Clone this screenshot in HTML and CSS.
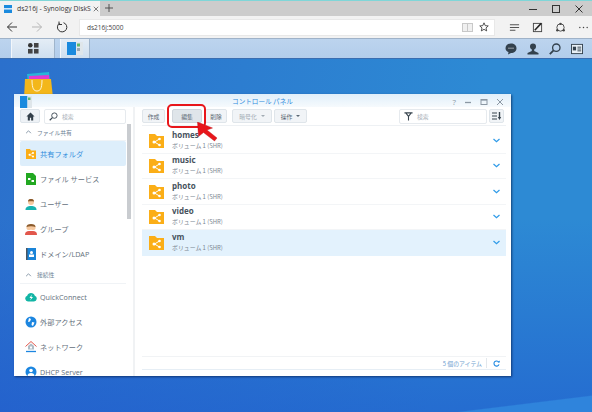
FILE: index.html
```html
<!DOCTYPE html>
<html lang="ja">
  <head>
    <meta charset="UTF-8" />
    <title>ds216j - Synology DiskStation</title>
    <link rel="stylesheet" href="styles.css">
  </head>
  <body>
    <div class="tabbar">
      <div class="tab">
        <svg class="fav" viewBox="0 0 8 8"><rect width="8" height="8" fill="#1a8ade"/><rect y="3" width="8" height="1.6" fill="#cfe6f8"/></svg>
        <span class="tab-title">ds216j - Synology DiskS</span>
        <svg class="tab-x" viewBox="0 0 8 8"><path d="M1 1l6 6M7 1l-6 6" stroke="#555" fill="none"/></svg>
      </div>
      <svg class="tab-new" viewBox="0 0 9 9"><path d="M4.5 0v9M0 4.500h9" stroke="#444" fill="none"/></svg>
      <div class="win-btns">
        <svg viewBox="0 0 10 10"><path d="M1 5.500h8" stroke="#333" fill="none"/></svg>
        <svg viewBox="0 0 10 10"><rect x="1.500" y="1.500" width="7" height="7" stroke="#333" fill="none"/></svg>
        <svg viewBox="0 0 10 10"><path d="M1.500 1.500l7 7M8.500 1.500l-7 7" stroke="#333" fill="none"/></svg>
      </div>
    </div>

    <div class="navbar">
      <div class="nav-btns">
        <svg viewBox="0 0 12 12"><path d="M11 6H1.500M6 1.500L1.500 6 6 10.500" stroke="#333" fill="none"/></svg>
        <svg viewBox="0 0 12 12"><path d="M1 6h9.500M6 1.500L10.500 6 6 10.500" stroke="#b5b5b5" fill="none"/></svg>
        <svg viewBox="0 0 12 12"><path d="M7.500 1.700A4.700 4.700 0 1 1 3.500 2.300" stroke="#333" fill="none"/><path d="M3 .5v3h3" stroke="#333" fill="none"/></svg>
      </div>
      <div class="address">
        <span>ds216j:5000</span>
        <svg class="reading" viewBox="0 0 11 9"><rect x=".5" y=".5" width="10" height="8" fill="#f0f0f0" stroke="#c8c8c8"/><path d="M5.500 0v9" stroke="#c8c8c8"/></svg>
        <svg class="star" viewBox="0 0 12 12"><path d="M6 1l1.500 3.400 3.600.3-2.700 2.400.8 3.600L6 8.800l-3.200 1.900.8-3.600L.9 4.700l3.600-.3z" stroke="#333" fill="none"/></svg>
      </div>
      <div class="nav-tools">
        <svg viewBox="0 0 12 12"><path d="M1 3h10M1 6h10M1 9h6" stroke="#444" fill="none"/></svg>
        <svg viewBox="0 0 12 12"><rect x="1.500" y="1.500" width="9" height="9" fill="none" stroke="#444"/><path d="M3 9l7-7.500" stroke="#222" stroke-width="1.600"/></svg>
        <svg viewBox="0 0 12 12"><circle cx="6" cy="6" r="4" fill="none" stroke="#444"/><circle cx="6" cy="2" r="1.300" fill="#444"/><circle cx="2.500" cy="9" r="1.300" fill="#444"/><circle cx="9.500" cy="9" r="1.300" fill="#444"/></svg>
        <svg viewBox="0 0 12 12"><circle cx="2" cy="6" r=".8" fill="#444"/><circle cx="6" cy="6" r=".8" fill="#444"/><circle cx="10" cy="6" r=".8" fill="#444"/></svg>
      </div>
    </div>

    <div class="taskbar">
      <div class="task-btn main-menu">
        <svg viewBox="0 0 12 12"><rect x="0" y="0" width="5" height="5" rx="2.500" fill="#333"/><rect x="6.500" y="0" width="5" height="5" fill="#444"/><rect x="0" y="6.500" width="5" height="5" fill="#444"/><rect x="6.500" y="6.500" width="5" height="5" fill="#444"/></svg>
      </div>
      <div class="task-btn app-btn">
        <svg viewBox="0 0 16 13"><rect width="9" height="13" fill="#1a8ade"/><rect x="9" width="7" height="13" fill="#dfe6ea"/><rect x="10" y="1.500" width="3" height="3" fill="#5fb86a"/><rect x="10" y="6" width="3" height="3" fill="#9aa7b2"/></svg>
      </div>
      <div class="task-tools">
        <svg viewBox="0 0 12 12"><path d="M6 .5c3.200 0 5.500 2 5.500 4.700S9.200 10 6 10L3 11.500l.5-2.400C1.500 8.300.5 6.900.5 5.200.5 2.500 2.800.5 6 .5z" fill="#33414d"/><path d="M3.500 5.200h1M5.500 5.200h1M7.500 5.200h1" stroke="#fff"/></svg>
        <svg viewBox="0 0 12 12"><circle cx="6" cy="3.500" r="3" fill="#33414d"/><path d="M4.800 6h2.400v2L11.500 10v1.500H.5V10l4.300-2z" fill="#33414d"/></svg>
        <svg viewBox="0 0 12 12"><circle cx="7.300" cy="4.700" r="3.700" fill="none" stroke="#33414d" stroke-width="1.300"/><path d="M4.600 7.400L.8 11.200" stroke="#33414d" stroke-width="1.800"/></svg>
        <svg viewBox="0 0 13 11"><rect x=".5" y=".5" width="12" height="10" fill="#e9f0f6" stroke="#33414d"/><rect x="2" y="3" width="3.500" height="4" fill="#33414d"/><path d="M7 3.500h4M7 5.500h4M7 7.500h4" stroke="#33414d"/></svg>
      </div>
    </div>

    <div class="desktop">
      <svg class="desk-icon" viewBox="0 0 30 26">
        <path d="M3 2l22-2 1 10H4z" fill="#27b5d8"/>
        <path d="M5 4l20-1 1 10H5z" fill="#e03bd0"/>
        <path d="M1 7h26l2 19H0z" fill="#f3b71b"/>
        <path d="M8 8c0 9 2 11 5 11s5-2 5-11" fill="none" stroke="#fff6d8" stroke-width="1"/>
      </svg>

      <div class="window">
        <div class="titlebar">
          <svg class="title-logo" viewBox="0 0 12 12"><rect width="7.500" height="12" fill="#1a8ade"/><rect x="7.500" width="4.500" height="12" fill="#dfe6ea"/><rect x="8" y="1.500" width="2.500" height="2.500" fill="#5fb86a"/></svg>
          <span class="title-text">コントロール パネル</span>
          <div class="title-btns">
            <span>?</span>
            <svg viewBox="0 0 8 8"><path d="M1 4.500h6" stroke="#8c98a4" stroke-width="1.300"/></svg>
            <svg viewBox="0 0 8 8"><rect x="1" y="1.500" width="6" height="5" fill="none" stroke="#8c98a4"/><path d="M1 2h6" stroke="#8c98a4" stroke-width="1.300"/></svg>
            <svg viewBox="0 0 8 8"><path d="M1 1l6 6M7 1L1 7" stroke="#8c98a4"/></svg>
          </div>
        </div>

        <div class="win-body">
          <aside class="sidebar">
            <div class="side-top">
              <div class="home-btn">
                <svg viewBox="0 0 10 10"><path d="M5 .5L.5 5H2v4.500h2.300V6.500h1.400v3H8V5h1.500z" fill="#333f4a"/></svg>
              </div>
              <div class="search-box side-search">
                <svg viewBox="0 0 10 10"><circle cx="6" cy="4" r="3" fill="none" stroke="#39454f"/><path d="M3.800 6.200L.8 9.200" stroke="#39454f" stroke-width="1.300"/></svg>
                <span>検索</span>
              </div>
            </div>
            <div class="side-scroll">
              <div class="side-head">
                <svg viewBox="0 0 8 5"><path d="M1 4l3-3 3 3" fill="none" stroke="#6d8194"/></svg>
                <span>ファイル共有</span>
              </div>
              <div class="side-item selected">
                <svg viewBox="0 0 12 12"><path d="M1 1h4l1 1.500h5V11H1z" fill="#fbae17"/><circle cx="4.500" cy="6.800" r="1" fill="#fff"/><circle cx="8" cy="5" r="1" fill="#fff"/><circle cx="8" cy="8.600" r="1" fill="#fff"/><path d="M8 5L4.500 6.800 8 8.600" stroke="#fff" stroke-width=".6" fill="none"/></svg>
                <span>共有フォルダ</span>
              </div>
              <div class="side-item">
                <svg viewBox="0 0 12 12"><path d="M1 0h7l3 3v9H1z" fill="#22a821"/><rect x="3" y="5" width="2.500" height="2" fill="#fff"/><rect x="6.500" y="7" width="2.500" height="2" fill="#fff"/></svg>
                <span>ファイル サービス</span>
              </div>
              <div class="side-item">
                <svg viewBox="0 0 12 12"><path d="M.5 12c0-3 2-4 5.500-4s5.500 1 5.500 4z" fill="#17b3b0"/><circle cx="6" cy="4" r="3" fill="#f6c9a0"/><path d="M3 3.500C3 1.500 4.500 1 6 1s3 .5 3 2.500C7 3 5 3 3 3.500z" fill="#8a5a2b"/></svg>
                <span>ユーザー</span>
              </div>
              <div class="side-item">
                <svg viewBox="0 0 12 12"><path d="M0 12c0-3 1.500-4 4-4h4c2.500 0 4 1 4 4z" fill="#e2574c"/><circle cx="4" cy="4.500" r="2.600" fill="#f6c9a0"/><circle cx="8" cy="4.500" r="2.600" fill="#f6c9a0"/><path d="M1.500 4C1.500 2 3 1 6 1s4.500 1 4.500 3C8 3 4 3 1.500 4z" fill="#8a5a2b"/></svg>
                <span>グループ</span>
              </div>
              <div class="side-item">
                <svg viewBox="0 0 12 12"><rect x="1" width="10" height="12" fill="#1a84d8"/><rect x="1" width="1.500" height="12" fill="#4a5560"/><circle cx="6.500" cy="4.500" r="1.500" fill="#fff"/><rect x="4" y="6.500" width="5" height="2.500" fill="#fff"/></svg>
                <span>ドメイン/LDAP</span>
              </div>
              <div class="side-head head-net">
                <svg viewBox="0 0 8 5"><path d="M1 4l3-3 3 3" fill="none" stroke="#6d8194"/></svg>
                <span>接続性</span>
              </div>
              <div class="side-item">
                <svg viewBox="0 0 12 12"><path d="M3 10.500a3 3 0 0 1-.8-5.800 4 4 0 0 1 7.600 0 3 3 0 0 1-.8 5.800z" fill="#12b5a5"/><path d="M6.800 3.500L4.500 7h1.600l-1 2.500L8 6H6.300z" fill="#fff"/></svg>
                <span>QuickConnect</span>
              </div>
              <div class="side-item">
                <svg viewBox="0 0 12 12"><circle cx="6" cy="6" r="5.500" fill="#1c86e0"/><path d="M4 2l2 1-1 2.500-2 .5zM7 6l2.500.5L8 10 6.500 9z" fill="#fff"/></svg>
                <span>外部アクセス</span>
              </div>
              <div class="side-item">
                <svg viewBox="0 0 12 12"><path d="M6 .5L.5 5.500M6 .5l5.500 5" stroke="#e2574c" fill="none"/><path d="M3 5l3-2.500L9 5v3.500H3z" fill="#aebcc6"/><rect x="5" y="5.500" width="2" height="2" fill="#fff"/><path d="M1 10.500h10" stroke="#1c86e0" stroke-width="1.300"/></svg>
                <span>ネットワーク</span>
              </div>
              <div class="side-item">
                <svg viewBox="0 0 12 12"><circle cx="6" cy="6" r="5.500" fill="#1c86e0"/><circle cx="6" cy="4.500" r="1.800" fill="#fff"/><path d="M2.500 10c0-2 1.500-3 3.500-3s3.500 1 3.500 3z" fill="#fff"/></svg>
                <span>DHCP Server</span>
              </div>
            </div>
            <div class="scrollbar"></div>
          </aside>

          <main class="content">
            <div class="toolbar">
              <button class="btn">作成</button>
              <button class="btn active">編集</button>
              <button class="btn">削除</button>
              <button class="btn disabled">暗号化 <i class="caret"></i></button>
              <button class="btn">操作 <i class="caret"></i></button>
              <div class="search-box filter">
                <svg viewBox="0 0 10 10"><path d="M.5 1h9M2 1l3 4v4.500M8 1L5 5" fill="none" stroke="#39454f" stroke-width="1.200"/></svg>
                <span>検索</span>
              </div>
              <button class="btn sort">
                <svg viewBox="0 0 10 8"><path d="M0 1h5M0 4h5M0 7h5" stroke="#39454f"/><path d="M7.500 0v6" stroke="#39454f" stroke-width="1.400"/><path d="M5.800 5h3.400L7.500 8z" fill="#39454f"/></svg>
              </button>
            </div>

            <div class="list" id="list"></div>

            <div class="footer">
              <span>5 個のアイテム</span>
              <i class="foot-sep"></i>
              <svg viewBox="0 0 10 10"><path d="M8.200 3A3.700 3.700 0 1 0 8.600 6.200" fill="none" stroke="#1c86e0" stroke-width="1.500"/><path d="M6.400 3.600h3.200V.6z" fill="#1c86e0"/></svg>
            </div>
          </main>
        </div>
      </div>

      <div class="highlight"></div>
      <svg class="arrow" viewBox="0 0 21 20"><path d="M.5 0l1 14.500 5-4 11 8.500 2.500-3-10-8 5.500-2z" fill="#e8161b" stroke="#b80f14" stroke-width=".4"/></svg>
    </div>

    <script>
      var folders = ["homes", "music", "photo", "video", "vm"];
      var html = "";
      folders.forEach(function (name, i) {
        html +=
          '<div class="row' + (i == 4 ? " current" : "") + '">' +
          '<svg class="folder" viewBox="0 0 15 15"><path d="M0 1h6l2 2h7v12H0z" fill="#fbae17"/>' +
          '<path d="M10.500 6L5.500 9l5 3" stroke="#fff" fill="none"/><circle cx="5" cy="9" r="1.500" fill="#fff"/>' +
          '<circle cx="10.500" cy="6" r="1.300" fill="#fff"/><circle cx="10.500" cy="12" r="1.300" fill="#fff"/></svg>' +
          '<div class="row-text"><div class="row-name">' + name + '</div><div class="row-sub">ボリューム 1 (SHR)</div></div>' +
          '<svg class="chev" viewBox="0 0 7 5"><path d="M.5 1l3 2.800L6.500 1" fill="none" stroke="#2f9be8" stroke-width="1.200"/></svg>' +
          "</div>";
      });
      document.getElementById("list").innerHTML = html;
    </script>
  </body>
</html>
```

FILE: styles.css
```css
* {
  box-sizing: border-box;
}
html,
body {
  margin: 0;
  height: 412px;
  overflow: hidden;
}
body {
  display: flex;
  flex-direction: column;
  font-family: "Noto Sans CJK JP", "Open Sans", sans-serif;
  color: #55616d;
  background: #2c72cc;
}
svg {
  display: block;
  flex: none;
}

/* browser chrome */
.tabbar {
  height: 16px;
  display: flex;
  align-items: stretch;
  background: #cccccc;
  border-top: 1px solid #7fd6d8;
}
.tab {
  width: 100px;
  display: flex;
  align-items: center;
  padding-left: 4px;
  background: #f2f2f2;
}
.fav {
  width: 8px;
  height: 8px;
}
.tab-title {
  margin-left: 5px;
  width: 77px;
  white-space: nowrap;
  font: 6.800px "Open Sans", sans-serif;
  color: #333;
}
.tab-x {
  width: 6px;
  height: 6px;
  margin-left: -1px;
}
.tab-new {
  width: 8px;
  height: 8px;
  margin: 3px 0 0 5px;
}
.win-btns {
  margin-left: auto;
  display: flex;
  align-items: center;
  gap: 13px;
  padding-right: 8px;
}
.win-btns svg {
  width: 10px;
  height: 10px;
}
.navbar {
  height: 22px;
  display: flex;
  align-items: center;
  background: #f2f2f2;
}
.nav-btns {
  width: 79px;
  display: flex;
  gap: 13px;
  padding-left: 6px;
}
.nav-btns svg {
  width: 12px;
  height: 12px;
}
.address {
  width: 416px;
  height: 17px;
  display: flex;
  align-items: center;
  padding-left: 7px;
  background: #fff;
  border: 1px solid #e8e8e8;
  font: 6.500px "Open Sans", sans-serif;
  color: #444;
}
.reading {
  width: 11px;
  height: 9px;
  margin-left: auto;
}
.star {
  width: 10px;
  height: 10px;
  margin: 0 5px 0 6px;
}
.nav-tools {
  display: flex;
  align-items: center;
  gap: 12px;
  padding-left: 14px;
}
.nav-tools svg {
  width: 11px;
  height: 11px;
}

/* dsm taskbar */
.taskbar {
  height: 21px;
  display: flex;
  align-items: stretch;
  background: linear-gradient(#bcd4ee, #b3cdeb);
  border-top: 1px solid #9fb2c8;
  border-bottom: 1px solid #3a6db0;
}
.task-btn {
  display: flex;
  align-items: center;
  justify-content: center;
  background: linear-gradient(#e4edf6, #cfdfef);
  border-left: 1px solid #f3f7fb;
  border-right: 1px solid #9fb5cc;
}
.main-menu {
  width: 44px;
  margin-left: 11px;
}
.main-menu svg {
  width: 11px;
  height: 11px;
}
.app-btn {
  width: 30px;
  margin-left: 5px;
}
.app-btn svg {
  width: 16px;
  height: 13px;
}
.task-tools {
  margin-left: auto;
  display: flex;
  align-items: center;
  gap: 10px;
  padding-right: 9px;
  padding-left: 11px;
}
.task-tools svg {
  width: 12px;
  height: 12px;
}

/* desktop, window and marker sit on a free canvas */
.desktop {
  position: relative;
  flex: 1;
  background:
    linear-gradient(173deg, transparent 96%, #2f84dc 96.300%),
    linear-gradient(to bottom, transparent 45%, rgba(30, 84, 205, 0.55)),
    linear-gradient(100deg, #2b70cc, #2d8ad4 75%);
}
.desk-icon {
  position: absolute;
  left: 24px;
  top: 13px;
  width: 30px;
  height: 26px;
}
.window {
  position: absolute;
  left: 14px;
  top: 35px;
  width: 497px;
  height: 282px;
  display: flex;
  flex-direction: column;
  background: #fff;
  box-shadow: 1px 1px 2px rgba(0, 20, 60, 0.6);
}
.titlebar {
  height: 13px;
  display: flex;
  align-items: center;
  position: relative;
  background: linear-gradient(#e0effa, #f6fafd);
  flex: none;
}
.title-logo {
  width: 12px;
  height: 12px;
  margin: 3px 0 0 6px;
}
.title-text {
  position: absolute;
  left: 0;
  right: 0;
  top: 1px;
  text-align: center;
  font-size: 6.600px;
  line-height: 12px;
  color: #2e8bdc;
}
.title-btns {
  margin-left: auto;
  margin-top: 3px;
  display: flex;
  align-items: center;
  gap: 8px;
  padding-right: 7px;
  color: #8c98a4;
  font: 8px/8px "Open Sans", sans-serif;
}
.title-btns svg {
  width: 8px;
  height: 8px;
}
.win-body {
  flex: 1;
  display: flex;
  min-height: 0;
}

/* sidebar */
.sidebar {
  width: 121px;
  position: relative;
  border-right: 2px solid #f0f2f4;
  overflow: hidden;
  flex: none;
  padding-left: 6px;
}
.side-top {
  display: flex;
  gap: 4px;
  padding-top: 2px;
}
.home-btn {
  width: 20px;
  height: 14px;
  display: flex;
  align-items: center;
  justify-content: center;
  background: #eef2f6;
  border: 1px solid #dde4ea;
  border-radius: 2px;
}
.home-btn svg {
  width: 9px;
  height: 9px;
}
.search-box {
  display: flex;
  align-items: center;
  height: 15px;
  padding-left: 4px;
  gap: 4px;
  border: 1px solid #e6eaee;
  border-radius: 2px;
  font-size: 5.800px;
  color: #a8b0b8;
  background: #fff;
}
.search-box svg {
  width: 9px;
  height: 9px;
}
.side-search {
  width: 82px;
}
.side-scroll {
  width: 106px;
}
.side-head {
  height: 17px;
  display: flex;
  align-items: center;
  padding-left: 5px;
  gap: 5px;
  font-size: 5.800px;
  color: #6d8194;
  border-bottom: 1px solid #f0f3f6;
}
.side-head svg {
  width: 7px;
  height: 4px;
}
.head-net {
  height: 18px;
}
.side-item {
  height: 25px;
  display: flex;
  align-items: center;
  gap: 3px;
  padding-left: 5px;
  font-size: 7.200px;
  font-family: "Open Sans", "Noto Sans CJK JP", sans-serif;
  color: #64707c;
  white-space: nowrap;
}
.side-item svg {
  width: 12px;
  height: 12px;
}
.side-item.selected {
  background: #ddeefb;
  color: #2e8bdc;
  border-radius: 2px;
}
.scrollbar {
  position: absolute;
  left: 113px;
  top: 17px;
  width: 4px;
  height: 95px;
  background: #c9ccd0;
}

/* main pane */
.content {
  flex: 1;
  min-width: 0;
  display: flex;
  flex-direction: column;
  padding: 0 5px 0 7px;
}
.toolbar {
  display: flex;
  align-items: flex-start;
  padding-top: 2px;
  height: 19px;
  flex: none;
  border-bottom: 1px solid #eef1f4;
}
.btn {
  height: 14px;
  padding: 0;
  margin-right: 3px;
  width: 23px;
  display: flex;
  align-items: center;
  justify-content: center;
  gap: 2px;
  font: 5.800px "Noto Sans CJK JP", sans-serif;
  color: #5c6874;
  background: #f1f4f7;
  border: 1px solid #dfe5ea;
  border-radius: 2px;
}
.btn:nth-child(2) {
  width: 30px;
  margin-left: 4px;
}
.btn.active {
  background: #dfe5ea;
  border-color: #cfd6dd;
}
.btn:nth-child(3) {
  width: 22px;
  margin-right: 5px;
}
.btn.disabled {
  width: 40px;
  margin-right: 2px;
  color: #a2abb4;
}
.btn:nth-child(5) {
  width: 33px;
}
.caret {
  width: 0;
  height: 0;
  margin-left: 2px;
  border: 2px solid transparent;
  border-top-color: currentColor;
  border-bottom: 0;
}
.filter {
  width: 88px;
  margin-left: auto;
  margin-right: 2px;
}
.filter svg {
  width: 9px;
  height: 9px;
}
.btn.sort {
  width: 15px;
  margin-right: 2px;
}
.sort svg {
  width: 10px;
  height: 8px;
}
.list {
  flex: 1;
  padding-top: 2px;
}
.row {
  height: 25.500px;
  display: flex;
  align-items: center;
  padding: 0 6px 0 7px;
  border-bottom: 1px solid #f3f5f7;
}
.row.current {
  background: #e3f2fd;
  border-bottom: 0;
}
.folder {
  width: 15px;
  height: 15px;
}
.row-text {
  margin-left: 8px;
  flex: 1;
}
.row-name {
  font: bold 8px/9px "Open Sans", sans-serif;
  margin-bottom: 2px;
  color: #47525d;
}
.row-sub {
  font-size: 5.900px;
  line-height: 10px;
  color: #7b8691;
}
.chev {
  width: 7px;
  height: 5px;
}
.footer {
  height: 14px;
  margin-bottom: 6px;
  flex: none;
  display: flex;
  align-items: center;
  justify-content: flex-end;
  padding-right: 6px;
  font-size: 5.900px;
  color: #6f9fd0;
  border-top: 1px solid #f1f3f5;
  border-bottom: 1px solid #e6eef5;
}
.foot-sep {
  width: 1px;
  height: 10px;
  margin: 0 6px 0 4px;
  background: #e3e8ec;
}
.footer svg {
  width: 7px;
  height: 7px;
}

/* red annotation over the toolbar */
.highlight {
  position: absolute;
  left: 167px;
  top: 45px;
  width: 39px;
  height: 24px;
  border: 2.500px solid #e8161b;
  border-radius: 5px;
}
.arrow {
  position: absolute;
  left: 197px;
  top: 63px;
  width: 21px;
  height: 20px;
}
```
